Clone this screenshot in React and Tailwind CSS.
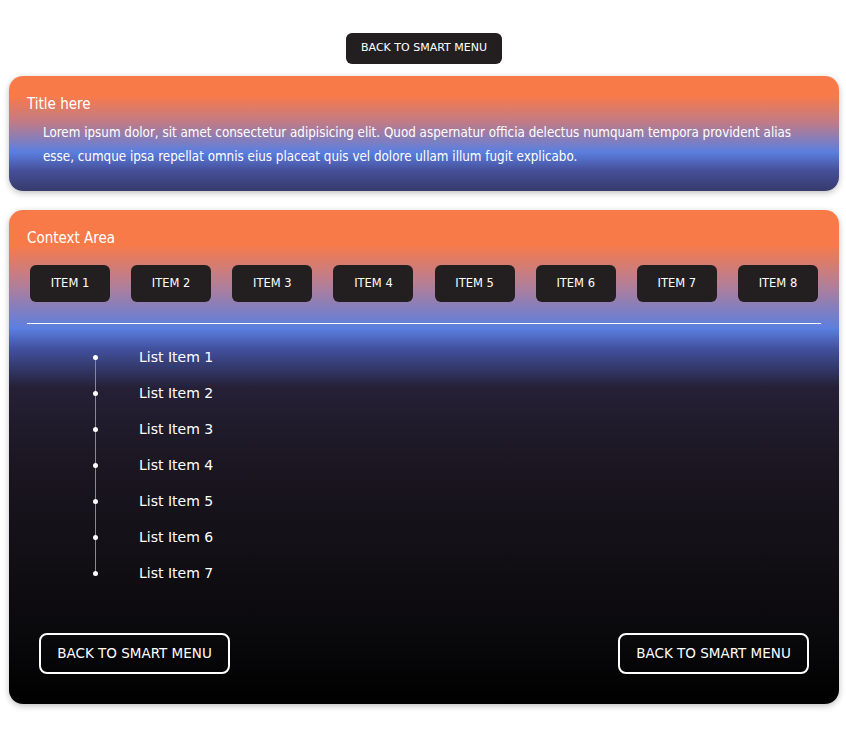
import React from 'react';

const font = { fontFamily: '"DejaVu Sans Condensed", "DejaVu Sans", sans-serif' };
const wide = { fontFamily: '"DejaVu Sans", sans-serif' };

const items = ['ITEM 1', 'ITEM 2', 'ITEM 3', 'ITEM 4', 'ITEM 5', 'ITEM 6', 'ITEM 7', 'ITEM 8'];
const listItems = ['List Item 1', 'List Item 2', 'List Item 3', 'List Item 4', 'List Item 5', 'List Item 6', 'List Item 7'];

export default function App() {
    return (
        <div className="min-h-screen bg-white pl-[9px] pr-[7px] pt-[33px] pb-[40px] text-white" style={font}>
            <div className="flex justify-center">
                <button className="w-[156px] h-[31px] rounded-[6px] bg-[#231f20] text-[11px] text-white" style={wide}>
                    BACK TO SMART MENU
                </button>
            </div>

            {/* Title card */}
            <div className="mt-[12px] h-[115px] rounded-[14px] shadow-[0_2px_6px_rgba(0,0,0,0.25)] bg-[linear-gradient(to_bottom,#f97a49_0%,#f97a49_17%,#c17b86_40%,#5b7fe0_66%,#46509a_82%,#363b6b_100%)] px-[18px] pt-[19px]">
                <h2 className="text-[15px] leading-[18px]">Title here</h2>
                <p className="mt-[8px] pl-[16px] pr-[24px] text-[13.3px] leading-[24px] font-medium">
                    Lorem ipsum dolor, sit amet consectetur adipisicing elit. Quod aspernatur officia delectus numquam tempora provident alias esse, cumque ipsa repellat omnis eius placeat quis vel dolore ullam illum fugit explicabo.
                </p>
            </div>

            {/* Context card */}
            <div className="mt-[19px] h-[494px] rounded-[14px] shadow-[0_2px_6px_rgba(0,0,0,0.25)] bg-[linear-gradient(to_bottom,#f97a49_0%,#f97a49_7%,#b57e96_15%,#5b7fe0_24%,#4251a0_28%,#252036_36%,#1c1722_50%,#0a090c_85%,#000_100%)] px-[18px] pt-[19px] flex flex-col">
                <h2 className="text-[15px] leading-[18px]">Context Area</h2>
                <div className="mt-[18px] flex justify-between px-[3px]">
                    {items.map((it) => (
                        <button key={it} className="w-[80px] h-[37px] rounded-[6px] bg-[#231f20] text-[11.5px] text-white" style={wide}>
                            {it}
                        </button>
                    ))}
                </div>
                <div className="mt-[21px] h-px bg-white" />

                <div className="relative mt-[23px] ml-[66px]">
                    <div className="absolute left-[2px] top-[10px] bottom-[10px] w-px bg-[#8a8898]" />
                    <ul className="flex flex-col gap-[16px]">
                        {listItems.map((li) => (
                            <li key={li} className="flex items-center h-[20px]">
                                <span className="w-[5px] h-[5px] rounded-full bg-white relative" />
                                <span className="ml-[41px] text-[14px]" style={wide}>{li}</span>
                            </li>
                        ))}
                    </ul>
                </div>

                <div className="mt-auto mb-[30px] flex justify-between px-[12px]">
                    <button className="w-[191px] h-[41px] rounded-[8px] border-2 border-white text-[13.5px] text-white" style={wide}>
                        BACK TO SMART MENU
                    </button>
                    <button className="w-[191px] h-[41px] rounded-[8px] border-2 border-white text-[13.5px] text-white" style={wide}>
                        BACK TO SMART MENU
                    </button>
                </div>
            </div>
        </div>
    );
}
